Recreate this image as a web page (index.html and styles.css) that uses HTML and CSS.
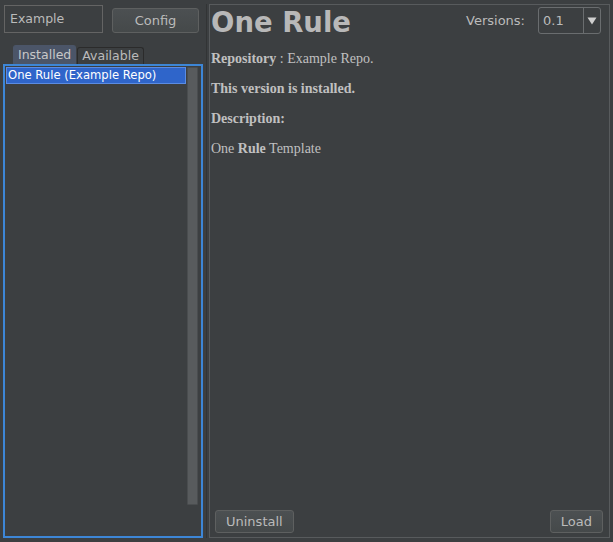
FILE: index.html
```html
<!DOCTYPE html>
<html>
<head>
<meta charset="utf-8">
<link rel="stylesheet" href="styles.css">
</head>
<body>
<div class="app">
  <div class="left">
    <div class="toprow">
      <div class="field">Example</div>
      <div class="btn config">Config</div>
    </div>
    <div class="tabs">
      <div class="tab active">Installed</div>
      <div class="tab">Available</div>
    </div>
    <div class="list">
      <div class="items">
        <div class="item sel">One Rule (Example Repo)</div>
      </div>
      <div class="scroll"><div class="thumb"></div></div>
    </div>
  </div>
  <div class="sep"></div>
  <div class="right">
    <div class="head">
      <div class="title">One Rule</div>
      <div class="versions">
        <span class="vlabel">Versions:</span>
        <div class="combo"><span class="cval">0.1</span><span class="carrow"><svg width="10" height="8" viewBox="0 0 10 8"><path d="M0.5 0.5 H9.5 L5 7.5 Z" fill="#cfcfcf"/></svg></span></div>
      </div>
    </div>
    <div class="info">
      <p><b>Repository</b> : Example Repo.</p>
      <p><b>This version is installed.</b></p>
      <p><b>Description:</b></p>
      <p>One <b>Rule</b> Template</p>
    </div>
    <div class="actions">
      <div class="btn small">Uninstall</div>
      <div class="btn small">Load</div>
    </div>
  </div>
</div>
</body>
</html>
```
FILE: styles.css
```css
html, body {
  margin: 0;
  padding: 0;
  background: #3c3f41;
  width: 613px;
  height: 542px;
  overflow: hidden;
  font-family: "Lucida Grande", "DejaVu Sans", "Liberation Sans", sans-serif;
  color: #bbbbbb;
}
.app {
  display: flex;
  height: 542px;
  box-sizing: border-box;
  padding: 4px 3px 4px 3px;
}
.left {
  width: 200px;
  display: flex;
  flex-direction: column;
}
.toprow {
  display: flex;
  align-items: flex-start;
  padding-top: 1px;
  height: 39px;
}
.field {
  margin-left: 1px;
  width: 92px;
  height: 26px;
  border: 1px solid #646464;
  font-size: 12.5px;
  line-height: 26px;
  padding-left: 5px;
  box-sizing: content-box;
  color: #bbbbbb;
}
.btn {
  border: 1px solid #5e6060;
  border-radius: 3px;
  background: linear-gradient(#4c5052, #45494a);
  color: #bbbbbb;
  text-align: center;
  box-sizing: border-box;
}
.config {
  margin-left: 9px;
  margin-top: 3px;
  width: 87px;
  height: 25px;
  font-size: 13px;
  line-height: 23px;
}
.tabs {
  display: flex;
  align-items: flex-end;
  padding-left: 10px;
  height: 19px;
  margin-top: 1px;
}
.tab {
  font-size: 12.5px;
  height: 16px;
  line-height: 16px;
  padding: 0 4px;
  border: 1px solid #2b2b2b;
  border-bottom: none;
  border-radius: 3px 3px 0 0;
  background: #3c3f41;
  color: #bbbbbb;
  margin-right: 1px;
}
.tab.active {
  height: 18px;
  line-height: 18px;
  background: #4b5568;
  border-color: #4b5568;
  color: #c8c8c8;
  padding: 0 4px;
}
.list {
  flex: 1;
  border: 2px solid #3d86d6;
  display: flex;
  padding: 1px;
  box-sizing: border-box;
  width: 200px;
  background: #3c3f41;
}
.items {
  flex: 1;
}
.item {
  font-size: 11.6px;
  height: 15px;
  line-height: 15px;
  padding-left: 1px;
  color: #ffffff;
}
.item.sel {
  background: #2f65ca;
  border: 1px solid #5b8ce3;
  margin-right: 1px;
}
.scroll {
  width: 11px;
  padding: 0 0 30px 0;
  margin-right: 2px;
  display: flex;
}
.thumb {
  flex: 1;
  background: #585b5d;
  border: 1px solid #4a4d4f;
  border-radius: 1px;
}
.sep {
  width: 2px;
  margin-left: 3px;
  border-left: 1px solid #323435;
}
.right {
  flex: 1;
  border: 1px solid #585b5d;
  display: flex;
  flex-direction: column;
  padding: 0 0 0 1px;
  box-sizing: border-box;
}
.head {
  display: flex;
  justify-content: space-between;
  align-items: flex-start;
  height: 45px;
}
.title {
  font-family: "Lucida Grande", "DejaVu Sans", sans-serif;
  font-weight: bold;
  font-size: 27.5px;
  line-height: 34px;
  color: #b8b8b8;
}
.versions {
  display: flex;
  align-items: center;
  margin-top: 2px;
  margin-right: 8px;
}
.vlabel {
  font-size: 13px;
  margin-right: 13px;
  color: #bbbbbb;
}
.combo {
  display: flex;
  width: 63px;
  height: 27px;
  border: 1px solid #6a6d6f;
  border-radius: 3px;
  box-sizing: border-box;
}
.cval {
  flex: 1;
  font-size: 13px;
  line-height: 25px;
  padding-left: 4px;
}
.carrow {
  width: 16px;
  border-left: 1px solid #6a6d6f;
  display: flex;
  align-items: center;
  justify-content: center;
}
.info {
  flex: 1;
  font-family: "Liberation Serif", "Times New Roman", serif;
  font-size: 14px;
  color: #c0c0c0;
}
.info p {
  margin: 0 0 12px 0;
  line-height: 18px;
}
.actions {
  display: flex;
  justify-content: space-between;
  padding: 0 6px 4px 4px;
}
.btn.small {
  font-size: 13px;
  height: 23px;
  line-height: 21px;
  padding: 0 10px;
}
```
